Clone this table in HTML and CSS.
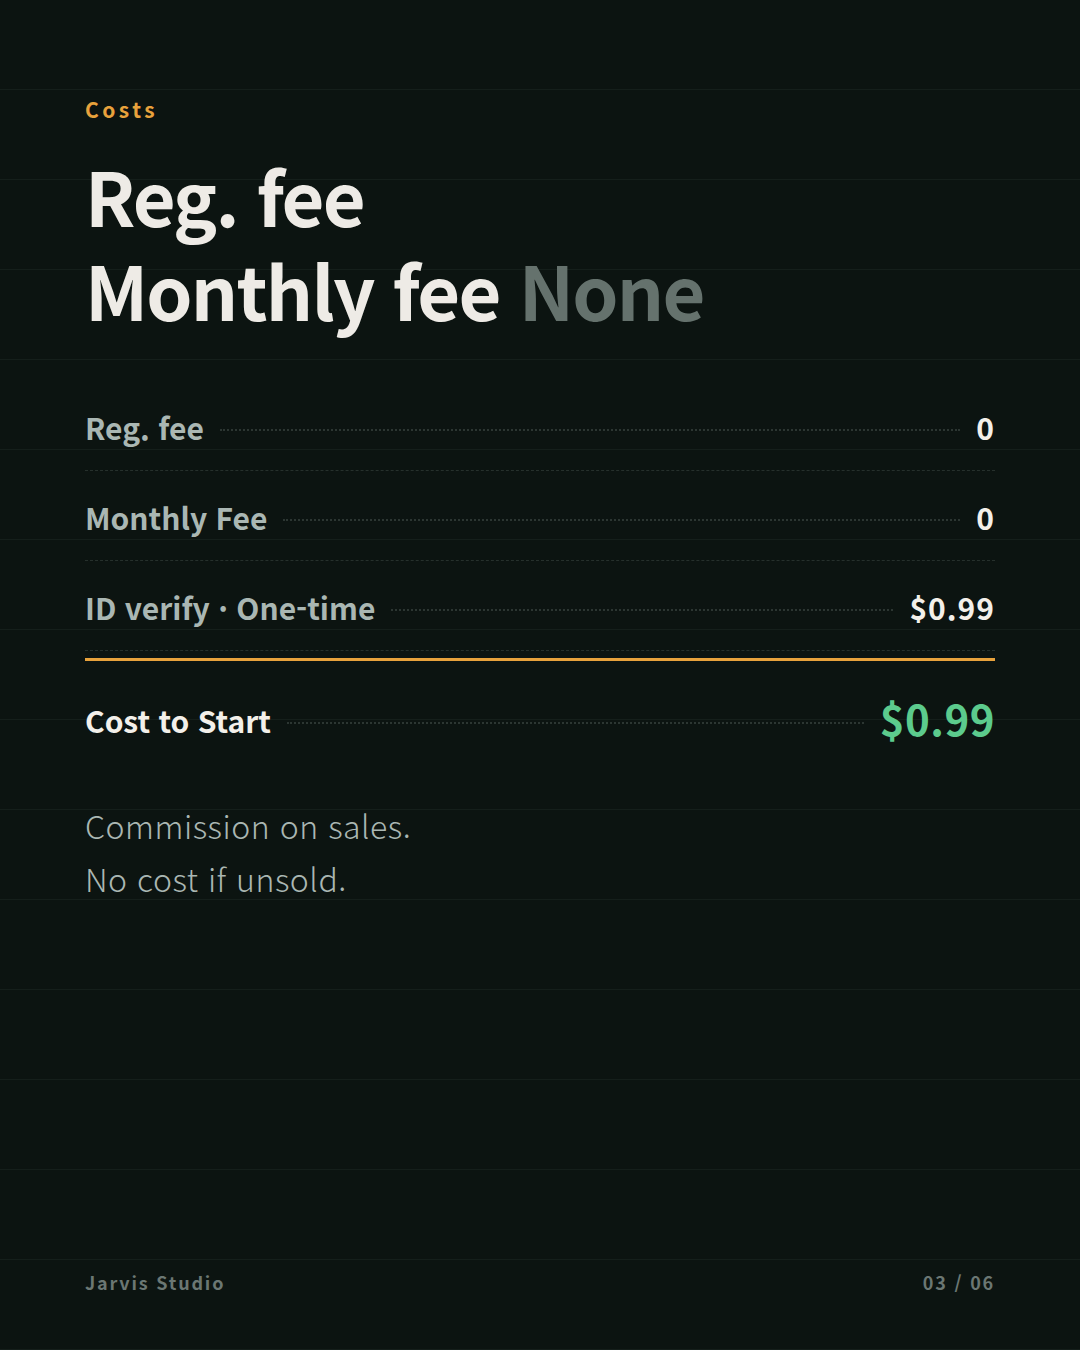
FILE: index.html
```html
<!DOCTYPE html>
<html lang="ko">
<head>
    <meta charset="UTF-8">
    <meta name="viewport" content="width=device-width, initial-scale=1.0">
    <title>Costs</title>
    <link rel="stylesheet" href="styles.css">
</head>
<body>
    <div class="page">
        <p class="eyebrow">Costs</p>
        <h1 class="title">
            <span class="line">Reg. fee</span>
            <span class="line">Monthly fee <span class="muted">None</span></span>
        </h1>

        <div class="cost-list">
            <div class="row">
                <span class="label">Reg. fee</span>
                <span class="leader"></span>
                <span class="value">0</span>
            </div>
            <div class="row">
                <span class="label">Monthly Fee</span>
                <span class="leader"></span>
                <span class="value">0</span>
            </div>
            <div class="row">
                <span class="label">ID verify · One-time</span>
                <span class="leader"></span>
                <span class="value">$0.99</span>
            </div>
            <div class="row total">
                <span class="label">Cost to Start</span>
                <span class="leader"></span>
                <span class="value">$0.99</span>
            </div>
        </div>

        <p class="note">Commission on sales.<br>No cost if unsold.</p>

        <div class="footer">
            <span>Jarvis Studio</span>
            <span>03 / 06</span>
        </div>
    </div>
</body>
</html>
```

FILE: styles.css
```css
body{
    margin: 0;
    background-color: #0c1411;
    font-family: "Noto Sans CJK KR", "Noto Sans", sans-serif;
}
.page{ /*90px 간격 가로줄 배경*/
    width: 1080px; height: 1350px; box-sizing: border-box;
    padding: 0 85px;
    display: flex; flex-direction: column;
    background-image: repeating-linear-gradient(to bottom, transparent 0, transparent 89px, #151f1b 89px, #151f1b 90px);
}
.eyebrow{
    margin: 94px 0 0; font-size: 21px; font-weight: 700;
    letter-spacing: 3.5px; color: #e8a23c; line-height: 30px;
}
.title{
    margin: 24px 0 0; font-size: 74px; font-weight: 700;
    color: #eeebe6; letter-spacing: -1.8px;
}
.title .line{ display: block; height: 94px; line-height: 94px; }
.title .muted{ color: #65726d; }

.cost-list{ margin-top: 45px; }
.row{
    display: flex; align-items: center; gap: 16px;
    height: 90px; box-sizing: border-box;
    padding-top: 2px;
    border-bottom: 1px dashed #26302c;
}
.label{ font-size: 30px; font-weight: 700; color: #aab7b3; }
.leader{ flex: 1; border-bottom: 2px dotted #2c3632; margin-top: 6px; }
.value{ font-size: 30px; font-weight: 700; color: #f3f0ea; letter-spacing: 1px; }

.row.total{
    height: 121px; padding-top: 0;
    border-top: 3px solid #e8a23c; border-bottom: 0;
    margin-top: 7px;
}
.row.total .label{ color: #f3f0ea; }
.row.total .value{ font-size: 42px; color: #5ccb8d; letter-spacing: 0.5px; margin-top: -6px; }

.note{
    margin: 20px 0 0; font-size: 32px; font-weight: 300;
    line-height: 53px; letter-spacing: 0.5px; color: #aab7b3;
}
.footer{
    margin: auto 0 23px; height: 90px;
    display: flex; justify-content: space-between; align-items: center;
    font-size: 18px; font-weight: 700; letter-spacing: 1.8px; color: #6b7773;
}
```
